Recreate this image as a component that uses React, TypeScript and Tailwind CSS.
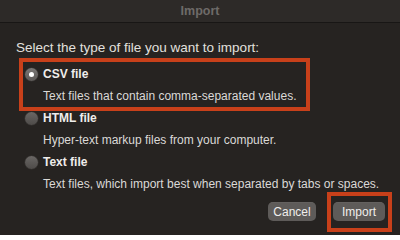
import React from "react";

function Radio({ checked }: { checked?: boolean }) {
  return checked ? (
    <span className="flex h-[13px] w-[13px] items-center justify-center rounded-full bg-gradient-to-b from-[#7a7775] to-[#5c5957] shadow-[0_0_0_0.5px_#3a3735]">
      <span className="h-[5px] w-[5px] rounded-full bg-white" />
    </span>
  ) : (
    <span className="h-[13px] w-[13px] rounded-full bg-gradient-to-b from-[#6a6765] to-[#4e4b49] shadow-[0_0_0_0.5px_#3a3735]" />
  );
}

function Option({ title, desc, checked }: { title: string; desc: string; checked?: boolean }) {
  return (
    <div className="flex flex-col gap-[6px]">
      <div className="flex h-[16px] items-center gap-[5px] pl-[25px]">
        <Radio checked={checked} />
        <span className="text-[12px] font-bold text-[#efedeb]">{title}</span>
      </div>
      <div className="h-[16px] pl-[43px] text-[12px] text-[#dbd9d7]">{desc}</div>
    </div>
  );
}

export default function App() {
  return (
    <div
      className="relative h-[235px] w-[400px] overflow-hidden bg-[#262321] text-[13px] leading-[16px]"
      style={{ fontFamily: '"Liberation Sans", Arial, sans-serif' }}
    >
      <div className="flex h-[23px] items-center justify-center border-b border-[#181615] bg-[#2d2a28]">
        <span className="text-[12.5px] font-bold text-[#6e6b68]">Import</span>
      </div>
      <div className="flex flex-col pt-[17px]">
        <div className="pl-[16px] text-[13.5px] text-[#e2e0de]">Select the type of file you want to import:</div>
        <div className="mt-[10px] flex flex-col gap-[6px]">
          <Option checked title="CSV file" desc="Text files that contain comma-separated values." />
          <Option title="HTML file" desc="Hyper-text markup files from your computer." />
          <Option title="Text file" desc="Text files, which import best when separated by tabs or spaces." />
        </div>
        <div className="mt-[10px] flex justify-end gap-[17px] pr-[15px]">
          <button className="h-[19px] w-[48px] rounded-[5px] bg-[#5e5b59] text-[12px] text-[#f0eeec] shadow-[0_0.5px_0_#77747288_inset]">
            Cancel
          </button>
          <button className="h-[19px] w-[52px] rounded-[5px] bg-[#5e5b59] text-[12px] text-[#f0eeec] shadow-[0_0.5px_0_#77747288_inset]">
            Import
          </button>
        </div>
      </div>
      <div className="pointer-events-none absolute left-[19px] top-[58px] h-[53px] w-[291px] border-[4px] border-[#c8401a]" />
      <div className="pointer-events-none absolute left-[327px] top-[192px] h-[40px] w-[65px] border-[4px] border-[#c8401a]" />
    </div>
  );
}
